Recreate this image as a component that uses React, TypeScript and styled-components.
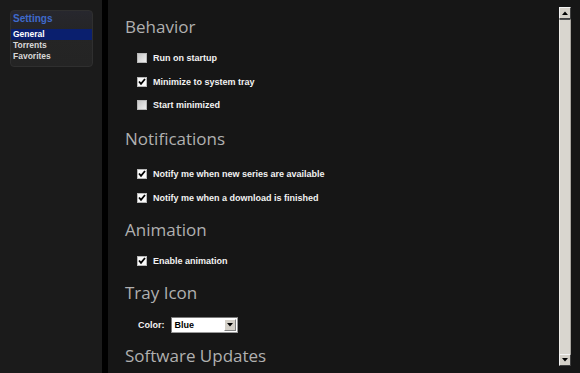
import { createGlobalStyle, styled } from "styled-components";

const GlobalStyle = createGlobalStyle`
  html, body {
    margin: 0;
    padding: 0;
    background: #161616;
  }
  body {
    font-family: "Liberation Sans", Arial, sans-serif;
  }
`;

const Window = styled.div`
  display: flex;
  width: 580px;
  height: 373px;
  overflow: hidden;
  background: #161616;
`;

const Sidebar = styled.nav`
  width: 102px;
  flex: none;
  background: #1b1b1b;
  padding: 10px 9px 0 10px;
  box-sizing: border-box;
`;

const Divider = styled.div`
  width: 6px;
  flex: none;
  background: #000;
`;

const MenuBox = styled.div`
  background: linear-gradient(#27272e, #252525 40%, #242424);
  border: 1px solid #2f2f2f;
  border-radius: 4px;
  padding: 1px 0 4px;
`;

const MenuTitle = styled.div`
  font-weight: bold;
  font-size: 10px;
  line-height: 14px;
  color: #3f6acb;
  padding-left: 2px;
  margin-bottom: 3px;
`;

const MenuItem = styled.div<{ $active?: boolean }>`
  font-weight: bold;
  font-size: 8.5px;
  line-height: 11px;
  height: 11px;
  padding-left: 2px;
  color: ${(p) => (p.$active ? "#ffffff" : "#d8d8d8")};
  background: ${(p) => (p.$active ? "#0a1f6e" : "transparent")};
`;

const Main = styled.main`
  flex: 1;
  display: flex;
`;

const Content = styled.div`
  flex: 1;
  padding: 16.5px 0 0 17px;
`;

const Section = styled.section<{ $space: number }>`
  margin-top: ${(p) => p.$space}px;
`;

const Heading = styled.h2<{ $gap: number }>`
  margin: 0 0 ${(p) => p.$gap}px;
  font-family: "Open Sans", "DejaVu Sans", sans-serif;
  font-weight: 400;
  font-size: 17px;
  line-height: 20px;
  color: #b0b0b0;
`;

const Row = styled.label`
  display: flex;
  align-items: center;
  gap: 6px;
  height: 23.5px;
  padding-left: 12px;
  font-weight: bold;
  font-size: 9px;
  color: #f2f2f2;
`;

const Box = styled.span<{ $checked?: boolean }>`
  display: inline-flex;
  align-items: center;
  justify-content: center;
  width: 10px;
  height: 10px;
  box-sizing: border-box;
  border: 1px solid #b8b8b8;
  background: ${(p) =>
    p.$checked ? "#fafafa" : "linear-gradient(135deg, #c8c8c8, #f0f0f0)"};
`;

const FieldRow = styled.div`
  display: flex;
  align-items: center;
  gap: 6px;
  height: 23.5px;
  padding-left: 13px;
  font-weight: bold;
  font-size: 9px;
  color: #f2f2f2;
`;

const Select = styled.div`
  display: flex;
  align-items: center;
  width: 67px;
  height: 16px;
  box-sizing: border-box;
  border: 1px solid #9a9a9a;
  border-top-color: #7a7a7a;
  border-left-color: #7a7a7a;
  background: #fff;
  padding: 1px;
  color: #000;
`;

const SelectText = styled.span`
  flex: 1;
  padding-left: 2px;
  font-size: 9px;
  font-weight: bold;
`;

const DropButton = styled.span`
  display: flex;
  align-items: center;
  justify-content: center;
  width: 12px;
  height: 12px;
  box-sizing: border-box;
  background: #d4d0c8;
  border: 1px solid;
  border-color: #fff #808080 #808080 #fff;
`;

const Scrollbar = styled.div`
  display: flex;
  flex-direction: column;
  width: 12px;
  height: 359px;
  margin: 7px 9px 0 0;
  background: #d8d5ce;
`;

const ScrollButton = styled.div`
  display: flex;
  align-items: center;
  justify-content: center;
  height: 12px;
  box-sizing: border-box;
  background: #d4d0c8;
  border: 1px solid;
  border-color: #f4f4f4 #404040 #404040 #f4f4f4;
`;

const Track = styled.div`
  flex: 1;
  background: #d9d6cf;
  border-left: 1px solid #f0eee9;
  border-right: 1px solid #a8a59f;
  border-top: 1px solid #505050;
`;

const Check = ({ checked }: { checked?: boolean }) => (
  <Box $checked={checked}>
    {checked && (
      <svg width="8" height="8" viewBox="0 0 8 8">
        <path d="M1 3.5 L3 5.8 L7 1" stroke="#000" strokeWidth="1.8" fill="none" />
      </svg>
    )}
  </Box>
);

const Arrow = ({ down }: { down?: boolean }) => (
  <svg width="6" height="4" viewBox="0 0 6 4">
    <path d={down ? "M0 0 H6 L3 3.5 Z" : "M0 4 H6 L3 0.5 Z"} fill="#000" />
  </svg>
);

type Option = { label: string; checked?: boolean };

// space = gap above the section, gap = gap under its heading
const sections: { title: string; space: number; gap: number; options: Option[] }[] = [
  {
    title: "Behavior",
    space: 0,
    gap: 9.75,
    options: [
      { label: "Run on startup" },
      { label: "Minimize to system tray", checked: true },
      { label: "Start minimized" },
    ],
  },
  {
    title: "Notifications",
    space: 12.25,
    gap: 13.25,
    options: [
      { label: "Notify me when new series are available", checked: true },
      { label: "Notify me when a download is finished", checked: true },
    ],
  },
  {
    title: "Animation",
    space: 10.25,
    gap: 9.75,
    options: [{ label: "Enable animation", checked: true }],
  },
];

export default function App() {
  return (
    <>
      <GlobalStyle />
      <Window>
        <Sidebar>
          <MenuBox>
            <MenuTitle>Settings</MenuTitle>
            <MenuItem $active>General</MenuItem>
            <MenuItem>Torrents</MenuItem>
            <MenuItem>Favorites</MenuItem>
          </MenuBox>
        </Sidebar>
        <Divider />
        <Main>
          <Content>
            {sections.map((s) => (
              <Section key={s.title} $space={s.space}>
                <Heading $gap={s.gap}>{s.title}</Heading>
                {s.options.map((o) => (
                  <Row key={o.label}>
                    <Check checked={o.checked} />
                    {o.label}
                  </Row>
                ))}
              </Section>
            ))}
            <Section $space={9.75}>
              <Heading $gap={10.75}>Tray Icon</Heading>
              <FieldRow>
                Color:
                <Select>
                  <SelectText>Blue</SelectText>
                  <DropButton>
                    <Arrow down />
                  </DropButton>
                </Select>
              </FieldRow>
            </Section>
            <Section $space={8.75}>
              <Heading $gap={0}>Software Updates</Heading>
            </Section>
          </Content>
          <Scrollbar>
            <ScrollButton>
              <Arrow />
            </ScrollButton>
            <Track />
            <ScrollButton>
              <Arrow down />
            </ScrollButton>
          </Scrollbar>
        </Main>
      </Window>
    </>
  );
}
